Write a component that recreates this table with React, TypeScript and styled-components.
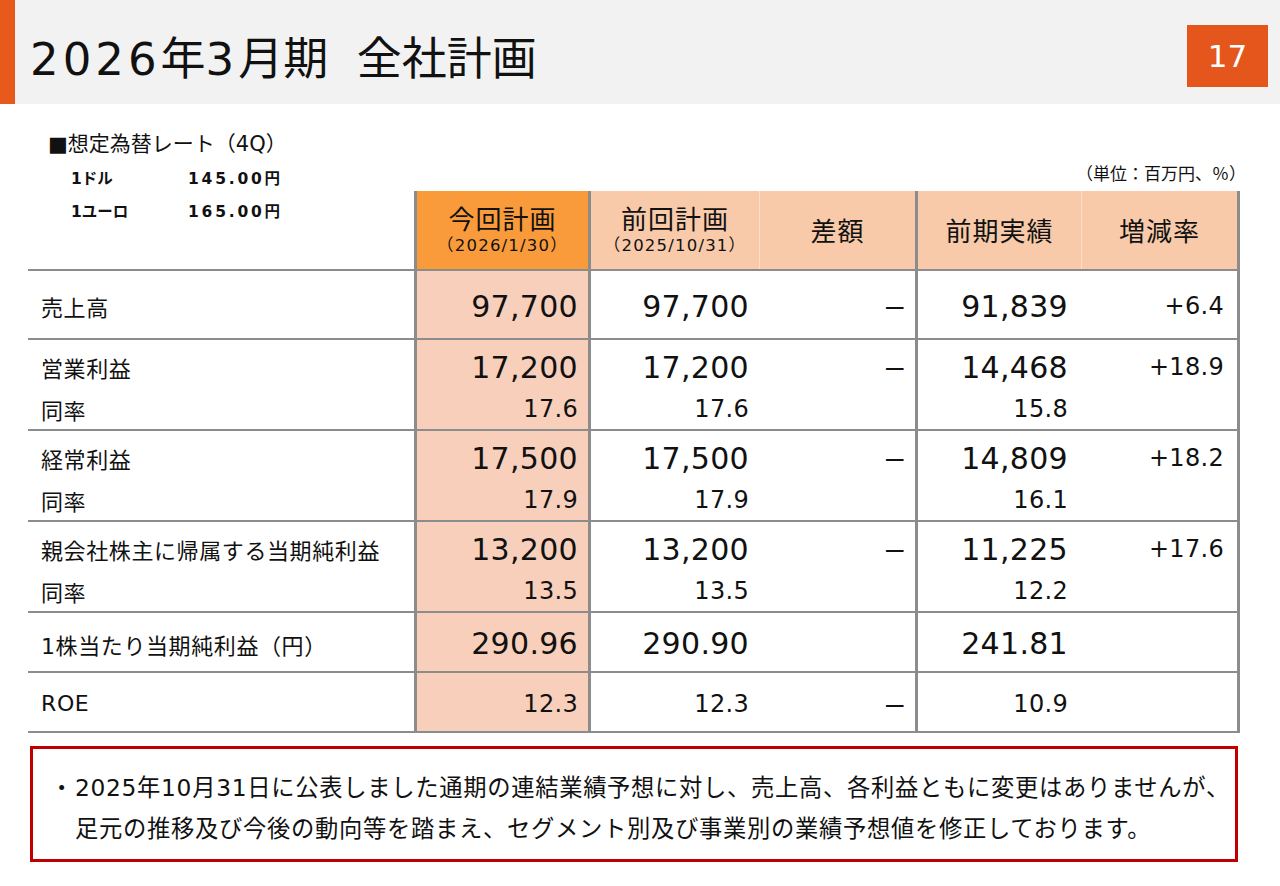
import React from "react";
import styled, { createGlobalStyle } from "styled-components";

const GlobalStyle = createGlobalStyle`
  html, body { margin: 0; padding: 0; background: #ffffff; }
  body {
    font-family: "DejaVu Sans", "Noto Sans CJK JP", sans-serif;
    color: #111111;
  }
  * { box-sizing: border-box; }
`;

const Page = styled.div`
  width: 1280px;
  height: 886px;
  overflow: hidden;
  background: #ffffff;
`;

const HeaderBar = styled.header`
  height: 104px;
  background: #f2f2f2;
  border-left: 15px solid #e8591c;
  display: flex;
  align-items: center;
  padding: 0 12px 0 15px;
`;

const Title = styled.h1`
  flex: 1;
  margin: 0;
  padding-top: 6px;
  font-size: 45px;
  font-weight: 400;
  color: #111;
  white-space: nowrap;
`;

const TitleDigits = styled.span`
  letter-spacing: 4px;
`;

const PageNo = styled.div`
  width: 81px;
  height: 62px;
  margin-top: 8px;
  background: #e5561c;
  color: #fff;
  font-size: 31px;
  display: flex;
  align-items: center;
  justify-content: center;
`;

const Content = styled.main`
  padding: 0 40px 0 28px;
`;

const TopRow = styled.div`
  height: 87px;
  display: flex;
  justify-content: space-between;
  align-items: flex-start;
`;

const FxBlock = styled.div`
  margin-left: 20px;
  padding-top: 25px;
`;

const FxTitle = styled.div`
  font-size: 21px;
  line-height: 30px;
`;

const FxList = styled.div`
  margin-top: 4px;
  padding-left: 23px;
`;

const FxItem = styled.div`
  display: flex;
  font-size: 15.5px;
  font-weight: bold;
  line-height: 33px;
`;

const FxName = styled.span`
  width: 117px;
`;

const FxValue = styled.span`
  letter-spacing: 2.8px;
`;

const UnitNote = styled.div`
  align-self: flex-end;
  margin-right: -6px;
  padding-bottom: 6px;
  font-size: 17px;
  white-space: nowrap;
`;

const Table = styled.div`
  width: 1212px;
  display: flex;
  flex-direction: column;
`;

const Row = styled.div<{ $h: number }>`
  display: grid;
  grid-template-columns: 386px 177px 169px 158px 164px 158px;
  height: ${(p) => p.$h}px;
  border-bottom: 2px solid #8c8c8c;
`;

type Tone = "none" | "accent" | "peach" | "tint";

const toneBg: Record<Tone, string> = {
  none: "transparent",
  accent: "#f99b3b",
  peach: "#f8caa9",
  tint: "#f7cfbb",
};

const Cell = styled.div<{
  $tone: Tone;
  $bl: number;
  $br: number;
  $light?: boolean;
}>`
  background: ${(p) => toneBg[p.$tone]};
  border-left: ${(p) => (p.$bl ? `${p.$bl}px solid #8c8c8c` : "none")};
  border-right: ${(p) =>
    p.$br
      ? `${p.$br}px solid #8c8c8c`
      : p.$light
      ? "1px solid #fbdfcc"
      : "none"};
`;

const HeadCell = styled(Cell)`
  display: flex;
  flex-direction: column;
  align-items: center;
  justify-content: center;
  padding-top: 4px;
`;

const HeadTitle = styled.div`
  font-size: 26px;
  line-height: 28px;
  letter-spacing: 1px;
`;

const HeadDate = styled.div`
  font-size: 16.5px;
  line-height: 24px;
  letter-spacing: 1.2px;
`;

const BodyCell = styled(Cell)<{ $pr: number; $double: boolean }>`
  display: flex;
  flex-direction: column;
  justify-content: ${(p) => (p.$double ? "flex-start" : "center")};
  align-items: flex-end;
  padding: ${(p) => (p.$double ? "5px" : "3px")} ${(p) => p.$pr}px 0 0;
`;

const LabelCell = styled(BodyCell)`
  align-items: flex-start;
  padding-left: 13px;
`;

const Line = styled.div<{ $h: number }>`
  height: ${(p) => p.$h}px;
  display: flex;
  align-items: center;
  white-space: nowrap;
`;

const LabelText = styled.span`
  font-size: 22px;
  letter-spacing: 0.6px;
`;

const Value = styled.span<{ $size: number }>`
  font-size: ${(p) => p.$size}px;
  letter-spacing: 0.3px;
`;

const NoteBox = styled.section`
  margin: 13px 0 0 2px;
  width: 1208px;
  border: 3px solid #c00000;
  padding: 18px 10px 10px 42px;
`;

const NoteText = styled.p`
  margin: 0;
  font-size: 23.3px;
  line-height: 41px;
  letter-spacing: 0.7px;
  text-indent: -25px;
  white-space: nowrap;
`;

const Bullet = styled.span`
  margin-right: 1px;
`;

type Col = { bl: number; br: number; pr: number; tone: Tone };

const cols: Col[] = [
  { bl: 0, br: 0, pr: 0, tone: "none" },
  { bl: 3, br: 3, pr: 10, tone: "tint" },
  { bl: 0, br: 0, pr: 11, tone: "none" },
  { bl: 0, br: 3, pr: 9, tone: "none" },
  { bl: 0, br: 0, pr: 14, tone: "none" },
  { bl: 0, br: 3, pr: 13, tone: "none" },
];

type DataRow = {
  label: string;
  sub?: string;
  vals: string[];
  subs?: string[];
  h: number;
  size: number;
};

const DASH = "ー";

const rows: DataRow[] = [
  { label: "売上高", vals: ["97,700", "97,700", DASH, "91,839", "+6.4"], h: 69, size: 30 },
  {
    label: "営業利益",
    sub: "同率",
    vals: ["17,200", "17,200", DASH, "14,468", "+18.9"],
    subs: ["17.6", "17.6", "", "15.8", ""],
    h: 91,
    size: 30,
  },
  {
    label: "経常利益",
    sub: "同率",
    vals: ["17,500", "17,500", DASH, "14,809", "+18.2"],
    subs: ["17.9", "17.9", "", "16.1", ""],
    h: 91,
    size: 30,
  },
  {
    label: "親会社株主に帰属する当期純利益",
    sub: "同率",
    vals: ["13,200", "13,200", DASH, "11,225", "+17.6"],
    subs: ["13.5", "13.5", "", "12.2", ""],
    h: 91,
    size: 30,
  },
  { label: "1株当たり当期純利益（円）", vals: ["290.96", "290.90", "", "241.81", ""], h: 60, size: 30 },
  { label: "ROE", vals: ["12.3", "12.3", DASH, "10.9", ""], h: 60, size: 24 },
];

const sizeFor = (v: string, base: number) => {
  if (v === DASH) return 22;
  if (v.startsWith("+")) return 24;
  return base;
};

const headers = [
  { title: "今回計画", date: "（2026/1/30）", tone: "accent" as Tone },
  { title: "前回計画", date: "（2025/10/31）", tone: "peach" as Tone, light: true },
  { title: "差額", tone: "peach" as Tone },
  { title: "前期実績", tone: "peach" as Tone, light: true },
  { title: "増減率", tone: "peach" as Tone },
];

export default function App() {
  return (
    <Page>
      <GlobalStyle />
      <HeaderBar>
        <Title>
          <TitleDigits>2026</TitleDigits>年<TitleDigits>3</TitleDigits>月期&nbsp;&nbsp;全社計画
        </Title>
        <PageNo>17</PageNo>
      </HeaderBar>
      <Content>
        <TopRow>
          <FxBlock>
            <FxTitle>■想定為替レート（4Q）</FxTitle>
            <FxList>
              <FxItem>
                <FxName>1ドル</FxName>
                <FxValue>145.00円</FxValue>
              </FxItem>
              <FxItem>
                <FxName>1ユーロ</FxName>
                <FxValue>165.00円</FxValue>
              </FxItem>
            </FxList>
          </FxBlock>
          <UnitNote>（単位：百万円、％）</UnitNote>
        </TopRow>

        <Table>
          <Row $h={80}>
            <Cell $tone="none" $bl={0} $br={0} />
            {headers.map((hd, i) => {
              const c = cols[i + 1];
              return (
                <HeadCell key={hd.title} $tone={hd.tone} $bl={c.bl} $br={c.br} $light={hd.light}>
                  <HeadTitle>{hd.title}</HeadTitle>
                  {hd.date && <HeadDate>{hd.date}</HeadDate>}
                </HeadCell>
              );
            })}
          </Row>

          {rows.map((r) => {
            const double = !!r.sub;
            return (
              <Row key={r.label} $h={r.h}>
                <LabelCell $tone="none" $bl={0} $br={0} $pr={0} $double={double}>
                  <Line $h={double ? 44 : r.h - 5}>
                    <LabelText>{r.label}</LabelText>
                  </Line>
                  {double && (
                    <Line $h={40}>
                      <LabelText>{r.sub}</LabelText>
                    </Line>
                  )}
                </LabelCell>
                {r.vals.map((v, i) => {
                  const c = cols[i + 1];
                  return (
                    <BodyCell key={i} $tone={c.tone} $bl={c.bl} $br={c.br} $pr={c.pr} $double={double}>
                      <Line $h={double ? 44 : r.h - 5}>
                        <Value $size={sizeFor(v, r.size)}>{v}</Value>
                      </Line>
                      {double && (
                        <Line $h={40}>
                          <Value $size={24}>{r.subs ? r.subs[i] : ""}</Value>
                        </Line>
                      )}
                    </BodyCell>
                  );
                })}
              </Row>
            );
          })}
        </Table>

        <NoteBox>
          <NoteText>
            <Bullet>・</Bullet>2025年10月31日に公表しました通期の連結業績予想に対し、売上高、各利益ともに変更はありませんが、
            <br />
            足元の推移及び今後の動向等を踏まえ、セグメント別及び事業別の業績予想値を修正しております。
          </NoteText>
        </NoteBox>
      </Content>
    </Page>
  );
}
